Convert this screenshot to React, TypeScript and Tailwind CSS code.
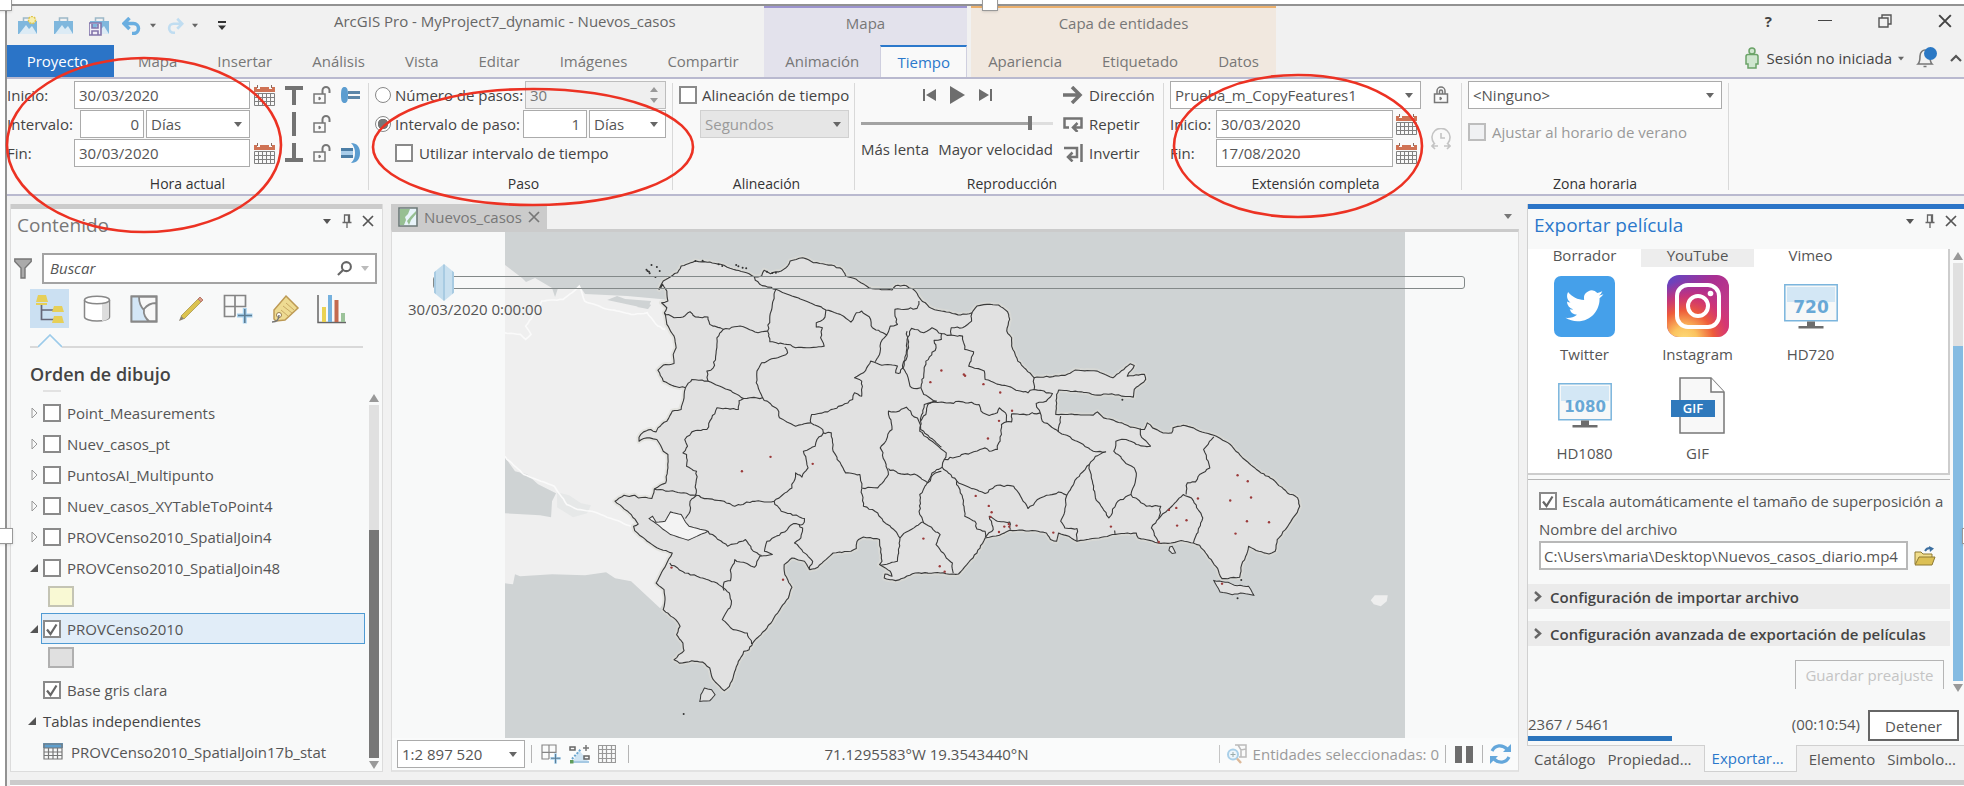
import React from "react";
import type { ReactNode } from "react";

/* ---------- map geometry ---------- */

type Pt = [number, number];
type Sheet = { x: number; y: number; kx: number };
const NW: Sheet = { x: 380, y: 190, kx: 2.8 };
const EAST: Sheet = { x: 900, y: 230, kx: 2.45 };
const SW: Sheet = { x: 480, y: 460, kx: 2.8 };

/* Turns the digitised points of one sheet into map coordinates. */
const place = (s: Sheet, list: string): Pt[] =>
  list
    .trim()
    .split(/\s+/)
    .map((p) => {
      const [a, b] = p.split(",").map(Number);
      return [s.x + a / s.kx, s.y + b / 3] as Pt;
    });

/* Breaks long segments up and shifts the new vertices a little, so borders look surveyed. */
const rough = (pts: Pt[], closed = false, amp = 1): string => {
  let seed = 7;
  const rnd = () => {
    seed = (seed * 16807) % 2147483647;
    return seed / 2147483647 - 0.5;
  };
  const src = closed ? [...pts, pts[0]] : pts;
  let d = `M${src[0][0].toFixed(1)} ${src[0][1].toFixed(1)}`;
  for (let i = 1; i < src.length; i++) {
    const [x0, y0] = src[i - 1];
    const [x1, y1] = src[i];
    const n = Math.max(1, Math.round(Math.hypot(x1 - x0, y1 - y0) / 3));
    for (let k = 1; k <= n; k++) {
      const j = k === n ? 0 : amp * 1.8;
      d += `L${(x0 + ((x1 - x0) * k) / n + rnd() * j).toFixed(1)} ${(y0 + ((y1 - y0) * k) / n + rnd() * j).toFixed(1)}`;
    }
  }
  return closed ? d + "Z" : d;
};

const outline: Pt[] = [
  ...place(
    NW,
    "655,930 680,912 695,916 710,912 720,920 740,918 758,922 765,893 797,875 803,830 803,790 790,780 772,745 752,740 735,742 722,750 722,738 735,722 755,715 770,722 775,710 800,690 815,660 840,655 848,620 852,590 820,585 790,570 775,537 790,522 820,517 818,490 826,470 820,435 800,400 793,365 800,350 785,335 803,330 800,300 788,280 778,295 790,270 830,245 840,225 860,218 880,210 920,213 950,220 985,235 1030,248 1045,258 1065,255 1072,238 1090,248 1120,240 1138,225 1145,210 1180,200 1210,215 1260,222 1290,235 1300,255 1330,265 1365,290 1400,296 1430,297 1440,284 1470,284 1495,300 1510,325 1540,352 1568,360",
  ),
  ...place(
    EAST,
    "110,243 145,252 173,245 185,225 210,220 238,222 260,242 265,265 258,300 270,320 270,345 285,390 325,440 400,433 425,417 480,420 518,440 545,415 560,398 570,403 553,435 595,430 598,445 570,475 568,498 540,495 515,488 480,492 440,482 385,477 380,490 378,550 430,550 470,552 480,542 495,560 540,575 560,588 595,595 602,575 615,590 640,605 662,605 665,590 690,582 715,590 730,600 765,612 800,635 840,685 880,725 910,745 945,785 970,800 975,825 965,850 940,895 920,925 915,960 900,968 875,960 850,945 845,970 833,1000 828,1038 785,1042 770,1005 745,965 730,942 715,935 685,928 660,935 628,935 580,920 575,905 530,908 490,918 430,930 410,915 385,905 380,930 365,925 355,905 320,898 265,897 240,912 215,918 205,920 185,965 150,1015 140,1028",
  ),
  ...place(
    SW,
    "1320,338 1285,335 1215,335 1160,358 1128,350 1130,338 1150,345 1145,330 1115,310 1122,300 1115,235 1070,227 1052,240 1050,262 1035,270 985,275 965,295 935,322 920,325 905,300 870,290 848,310 850,340 870,378 860,410 830,455 800,500 760,545 750,565 735,570 720,600 705,650 695,675 680,688 650,655 640,620 620,602 590,598 555,605 540,595 568,568 565,545 547,520 557,495 545,475 510,445 515,415 512,385 490,365 510,325 535,275 500,263 465,240 430,208 427,195 440,188 415,155",
  ),
];

const borders: string[] = [
  ...[
    "1045,258 1060,280 1105,295 1150,315 1200,335 1245,357 1285,370 1315,393 1330,365 1345,360 1370,385 1375,410 1415,432 1425,405 1445,400 1438,355 1500,352 1505,330",
    "1105,295 1095,340 1088,375 1082,420 1088,452 1135,460 1160,470 1200,470 1240,465 1230,440 1235,410 1218,408 1218,395 1238,385 1245,357",
    "793,365 820,380 845,378 865,362 880,378 915,378 920,400 958,415 1005,405 1055,425 1082,420",
    "958,415 940,440 938,480 930,530 912,540 915,570",
    "852,590 870,565 915,570 970,595 1015,622 1068,620 1050,575 1052,540 1065,515 1110,500 1138,485 1130,468",
    "1015,622 1002,628 1000,655 970,652 940,650 920,690 912,715 870,722 850,745 858,765 845,785 855,790 855,825 883,840 880,912",
    "1068,620 1110,655 1115,680 1160,705 1203,695 1230,710 1238,725 1220,745 1215,765 1182,780 1195,830 1178,858 1160,845 1150,890 1100,930 1040,930 990,945 960,930 910,922 880,912 765,893",
    "1203,695 1205,670 1250,662 1320,625 1325,605 1345,615 1345,570 1325,560 1350,545 1370,510 1395,520 1445,525 1440,545 1453,545 1460,530 1475,560 1485,590 1510,590",
    "1415,432 1398,455 1395,490 1383,512",
    "1460,530 1470,480 1472,420",
    "1238,725 1260,725 1265,780 1300,845 1340,850 1345,890 1390,890 1420,850 1410,810 1397,770 1430,715 1420,660 1450,660 1470,648 1505,690 1510,715 1568,768",
    "1510,690 1520,640 1555,630",
    "1420,832 1455,848 1500,852 1530,875 1545,850 1568,840",
  ].map((p) => rough(place(NW, p))),
  ...[
    "173,245 172,270 150,290 122,290 122,312 150,315 155,355 177,362 165,405 203,420 205,445 240,460 310,485 325,475 370,487 355,510 330,517 340,545 290,550 270,548 270,572 257,572 255,545 240,530 235,545 215,553 195,540 190,520 150,512 120,515 80,512 65,520 60,550 47,570 45,600 80,635 110,665 105,685 170,665 205,650 215,660 235,655 245,610 245,580 257,572",
    "325,440 325,475",
    "122,312 98,308 98,325 80,328 85,350 60,390 55,430 48,470 55,490 85,512",
    "100,308 75,290 55,305 25,292 15,320 18,350 5,410",
    "105,685 100,708 140,755 150,760 205,787 235,762 275,765 310,832 340,800 385,782 405,792 430,740 460,700 475,675 500,662 470,660 430,630 385,602 345,570 340,545",
    "385,602 390,555",
    "405,792 400,840 390,870 400,890 430,892 430,930",
    "460,700 465,740 475,800 508,860 530,810 562,790 575,735 570,710 545,690 520,660 525,630 550,625 575,640 610,645 585,610 585,592",
    "562,790 600,825 635,825 630,862 612,890 630,935",
    "630,862 690,790 710,800 738,860 715,935",
    "765,617 740,655 755,710 730,730 720,752 700,755 697,790",
    "523,908 522,898",
    "135,750 150,800 155,855 180,870 185,893 205,900 207,918",
    "205,918 225,895 215,855 235,870 265,872 267,895",
    "100,708 75,725 65,752 45,790 45,850 55,875 95,910 85,940 110,980 125,995 127,1025",
  ].map((p) => rough(place(EAST, p))),
  ...[
    "1065,82 1070,135 1110,155 1125,180 1155,205 1172,230 1165,300 1118,312",
    "1172,230 1190,212 1237,182",
    "820,120 840,150 905,172 900,190 875,187 835,222 800,240 793,270 815,280 780,285 765,318 710,295 700,320 698,358 680,362 680,388",
    "890,190 900,200 895,230 877,245 915,285 928,300 918,325",
    "603,102 585,120 585,150 572,172",
    "635,210 690,255 740,235 762,270 785,283",
    "528,305 570,335 620,350 660,365 695,395 700,430 675,475 705,505 745,515 757,548",
  ].map((p) => rough(place(SW, p))),
];

const islands = [
  rough(place(SW, "625,680 645,685 655,700 640,718 612,720 615,700"), true, 0.2),
  rough(place(EAST, "765,1048 800,1053 815,1062 850,1065 863,1092 830,1085 810,1090 780,1082"), true, 0.5),
  rough(place(EAST, "655,957 657,947 663,945 671,965 663,967"), true, 0.2),
];
const lake = rough(place(SW, "470,172 480,165 490,183 515,180 530,152 560,160 572,182 582,195 635,210 580,237 530,220 490,187"), true, 0.3);
const keys: Pt[] = [
  ...place(NW, "743,236 746,240 750,242 752,247 757,222 772,228 780,240 768,258 994,222 1000,226 1012,230 1022,232 880,210 900,209 945,220 955,225 1080,242 1095,246 1105,245"),
  ...place(EAST, "541,506 832,1046 823,1101"),
  ...place(SW, "567,758"),
];
const cases: Pt[] = [
  ...place(
    EAST,
    "98,418 71,453 153,430 156,434 201,459 242,484 271,539 239,569 212,622 182,794 214,824 221,843 218,857 252,886 263,878 264,886 239,902 282,883 372,904 513,886 655,836 673,830 698,867 675,883 726,802 805,808 823,732 848,750 856,799 846,870 900,873 818,907 630,932 785,1057 54,922 94,1005 106,1021",
  ),
  ...place(NW, "1010,840 1090,797 1208,818"),
  ...place(SW, "533,319 845,355"),
];
const roads = [
  rough(place(NW, "347,425 390,430 405,445 420,430 405,405 430,365 450,330 510,325 540,300 555,285 570,330 620,350 700,370 745,365 775,405 795,415"), false, 0.5),
  rough(place(SW, "67,-15 80,0 120,40 205,75 240,130 270,145 310,150 360,170 420,195"), false, 0.5),
];

function MapDrawing() {
  return (
    <svg viewBox="504 231 900 506" className="block h-full min-h-[506px] w-[80%]" preserveAspectRatio="xMidYMid slice" role="img" aria-label="Mapa de provincias">
      <rect x="0" y="0" width="1964" height="786" fill="#cfd3d4" />
      <path
        fill="#efefef"
        d="M504 264 521 277 525 281 534 277 551 287 554 296 557 287 580 287 584 293 626 295 659 298 675 300 700 400 690 560 659 607 630 580 614 577 605 571 584 574 551 573 519 575 514 573 512 583 504 582Z"
      />
      <path fill="#cfd3d4" d="M504 456 514 470 526 473 537 483 555 492 551 500 550 516 539 514 504 512ZM606 299 616 295 624 298 650 300 646 308 634 305ZM636 306l6-6 8 4-3 4z" />
      <path fill="#e6e8e8" d="M556 491l12 3 12 8 10 2-4 8-14 4-16-10z" />
      {roads.map((d) => (
        <path key={d} d={d} fill="none" stroke="#fafafa" strokeWidth="1.6" />
      ))}
      <path d={rough(outline, true, 0.6)} fill="none" stroke="#dcdcd6" strokeWidth="5" strokeLinejoin="round" opacity=".6" />
      <path d={rough(outline, true, 0.6)} fill="#e1e1e1" stroke="#3a3a3a" strokeWidth="1.1" strokeLinejoin="round" />
      {borders.map((d) => (
        <path key={d} d={d} fill="none" stroke="#3a3a3a" strokeWidth="1.1" strokeLinejoin="round" />
      ))}
      <path d={lake} fill="#f3f3f3" stroke="#3a3a3a" strokeWidth="1" />
      {islands.map((d) => (
        <path key={d} d={d} fill="#e1e1e1" stroke="#3a3a3a" strokeWidth="1" />
      ))}
      <path fill="#eeeeee" d="M1369 599 1373 594 1386 594 1385 600 1379 605 1372 603Z" />
      {keys.map(([x, y], i) => (
        <circle key={i} cx={x} cy={y} r="1" fill="#333" />
      ))}
      {cases.map(([x, y], i) => (
        <circle key={i} cx={x} cy={y} r="1.2" fill="#9b3a3a" />
      ))}
    </svg>
  );
}

/* ---------- small controls ---------- */

function Caret({ className = "" }: { className?: string }) {
  return (
    <svg viewBox="0 0 8 5" className={`h-[5px] w-2 shrink-0 ${className}`} aria-hidden="true">
      <path d="M0 0h8L4 5z" fill="currentColor" />
    </svg>
  );
}

function Select({ label, value, className = "", disabled = false, id }: { label: string; value: string; className?: string; disabled?: boolean; id?: string }) {
  return (
    <span className={`relative flex items-center ${className}`}>
      <select
        id={id}
        aria-label={label}
        disabled={disabled}
        className="h-7 w-full appearance-none border border-[#ababab] bg-white pr-5 pl-1 text-[#555] disabled:border-[#d0d0d0] disabled:bg-[#e6e6e6] disabled:text-[#9a9a9a] disabled:opacity-100"
      >
        <option>{value}</option>
      </select>
      <Caret className="pointer-events-none absolute right-2 text-[#666]" />
    </span>
  );
}

function Check({ id, checked = false, disabled = false }: { id: string; checked?: boolean; disabled?: boolean }) {
  return (
    <span className="relative flex shrink-0">
      <input
        id={id}
        type="checkbox"
        defaultChecked={checked}
        disabled={disabled}
        className="peer size-[18px] appearance-none border-2 border-[#8a8a8a] bg-white disabled:border-[#bdbdbd] disabled:bg-[#f0f1f3]"
      />
      <svg viewBox="0 0 18 18" className="pointer-events-none absolute inset-0 hidden peer-checked:block" aria-hidden="true">
        <path d="M4 9.5 7.5 14 13.5 4.5" fill="none" stroke="#666" strokeWidth="2.2" />
      </svg>
    </span>
  );
}

const field = "h-7 border border-[#ababab] bg-white px-1 text-[#555]";

/* ---------- icons ---------- */

const Calendar = () => (
  <svg viewBox="0 0 21 21" className="h-[21px] w-[21px] shrink-0" aria-hidden="true">
    <path d="M0 2h3v2h3V2h9v2h3V2h3v5H0z" fill="#cf7254" />
    <path d="M3.5 0v3M17.500 0v3" stroke="#8a6a60" />
    <path d="M.5 8.500h20v12H.5zM4.500 8.500v12M8.500 8.500v12M12.500 8.500v12M16.500 8.500v12M.5 12.500h20M.5 16.500h20" fill="none" stroke="#808080" />
  </svg>
);

const OpenLock = () => (
  <svg viewBox="0 0 18 18" className="size-[18px] shrink-0" fill="none" stroke="#777" aria-hidden="true">
    <path d="M1 8h11v9H1z" strokeWidth="1.500" />
    <path d="M9.500 8V4.500a3.500 3.500 0 0 1 7 0V7" strokeWidth="2" />
    <path d="M6 11v3l2-1.500z" fill="#777" />
  </svg>
);

const ClosedLock = () => (
  <svg viewBox="0 0 16 18" className="h-[18px] w-4 shrink-0" fill="none" stroke="#777" aria-hidden="true">
    <path d="M1.500 8h13v8.500h-13z" strokeWidth="1.500" />
    <path d="M4 8V5a4 4 0 0 1 8 0v3M6.500 8V5.500a1.500 1.500 0 0 1 3 0V8" strokeWidth="1.500" />
    <path d="M7 11v3l2-1.500z" fill="#777" />
  </svg>
);

const Ibar = ({ kind }: { kind: "top" | "mid" | "bottom" }) => (
  <svg viewBox="0 0 18 24" className="h-6 w-[18px] shrink-0" fill="#737373" aria-hidden="true">
    {kind === "top" && <path d="M0 3h18v4h-7v15H7V7H0z" />}
    {kind === "mid" && <path d="M7 0h4v24H7z" />}
    {kind === "bottom" && <path d="M0 21h18v-4h-7V2H7v15H0z" />}
  </svg>
);

const Pin = () => (
  <svg viewBox="0 0 10 14" className="h-[14px] w-[10px]" fill="none" stroke="#666" strokeWidth="1.300" aria-hidden="true">
    <path d="M2.500 8V1h5v7M6.500 1v7M.5 8.500h9M5 8.500V14" />
  </svg>
);

const Cross = ({ className = "" }: { className?: string }) => (
  <svg viewBox="0 0 12 12" className={`size-3 ${className}`} fill="none" stroke="currentColor" strokeWidth="1.700" aria-hidden="true">
    <path d="M1 1l10 10M11 1 1 11" />
  </svg>
);

const GridPlus = ({ className = "" }: { className?: string }) => (
  <svg viewBox="0 0 30 30" className={className} fill="none" aria-hidden="true">
    <path d="M1.500 1.500h21v11h-21zM12 1.500v21M1.500 12.500v10H12" stroke="#858585" strokeWidth="1.700" />
    <path d="M14 21.500h15.500M21.800 14v15.500" stroke="#a9d3ef" strokeWidth="4" />
    <path d="M15 21.500h14M21.800 15v14" stroke="#5d7d94" strokeWidth="1.600" />
  </svg>
);

const Window = ({ sun = false, disk = false }: { sun?: boolean; disk?: boolean }) => (
  <svg viewBox="0 0 21 20" className="h-5 w-[21px]" aria-hidden="true">
    <path d="M6.500 5V2h8v3" fill="none" stroke="#9cb8c8" strokeWidth="1.500" />
    <path d="M1 5h19v13H1z" fill="#7fb7dd" />
    <path d="M2 18 9 9l3 4 3-3 5 8z" fill="#dcebf5" />
    {sun && <circle cx="15" cy="4" r="3.500" fill="#f7efb0" stroke="#dfc44a" strokeWidth="1.500" strokeDasharray="2 1" />}
    {disk && <path d="M0 7h12v12H0zM3 8v4h6V8M3 19v-4h6v4" fill="#f1eef7" stroke="#8275ab" strokeWidth="1.600" />}
  </svg>
);

function Monitor({ text, size }: { text: string; size: number }) {
  return (
    <svg viewBox="0 0 54 45" className="h-[45px] w-[54px]" aria-hidden="true">
      <path d="M.8.8h52.400v36H.8z" fill="#f7f8f8" stroke="#7bb5dd" strokeWidth="1.500" />
      <path d="M3 3h48v15H3z" fill="#d3e7f5" />
      <text x="27" y="28.500" textAnchor="middle" fontFamily="DejaVu Sans" fontWeight="700" fontSize={size} fill="#68a8d6">
        {text}
      </text>
      <path d="M23 37.500h8V42h8.500v2.500h-25V42H23z" fill="#6d6d6d" />
    </svg>
  );
}

const Twitter = () => (
  <svg viewBox="0 0 61 61" className="size-[61px]" aria-hidden="true">
    <rect width="61" height="61" rx="7" fill="#45a0ea" />
    <path
      transform="translate(11.500 11) scale(1.580)"
      fill="#fff"
      d="M23.950 4.570a10 10 0 0 1-2.820.77 4.960 4.960 0 0 0 2.160-2.720c-.95.550-2 .95-3.130 1.180a4.920 4.920 0 0 0-8.380 4.480C7.690 8.100 4.070 6.130 1.640 3.160a4.820 4.820 0 0 0-.67 2.480c0 1.710.87 3.210 2.190 4.100a4.900 4.900 0 0 1-2.230-.62v.06a4.920 4.920 0 0 0 3.950 4.830 5 5 0 0 1-2.210.08 4.940 4.940 0 0 0 4.600 3.420A9.870 9.870 0 0 1 0 19.540a14 14 0 0 0 7.550 2.210c9.050 0 14-7.500 14-13.980 0-.210 0-.420-.02-.630a9.940 9.940 0 0 0 2.460-2.550z"
    />
  </svg>
);

const Instagram = () => (
  <svg viewBox="0 0 62 62" className="size-[62px]" aria-hidden="true">
    <defs>
      <linearGradient id="ig-base" x1="0" y1="0" x2="1" y2="1">
        <stop offset="0" stopColor="#5a49c8" />
        <stop offset=".4" stopColor="#a92f92" />
        <stop offset="1" stopColor="#d8437c" />
      </linearGradient>
      <radialGradient id="ig-glow" cx=".28" cy="1.050" r=".95">
        <stop offset="0" stopColor="#fddc7a" />
        <stop offset=".22" stopColor="#fbc35f" />
        <stop offset=".5" stopColor="#ee5c3a" />
        <stop offset=".75" stopColor="#d8336c" stopOpacity=".7" />
        <stop offset="1" stopColor="#c02f8a" stopOpacity="0" />
      </radialGradient>
    </defs>
    <rect width="62" height="62" rx="12" fill="url(#ig-base)" />
    <rect width="62" height="62" rx="12" fill="url(#ig-glow)" />
    <g fill="none" stroke="#fff" strokeWidth="4">
      <rect x="10" y="10" width="42" height="42" rx="11" />
      <circle cx="31" cy="31" r="10" />
    </g>
    <circle cx="43.500" cy="18.500" r="2.800" fill="#fff" />
  </svg>
);

const Gif = () => (
  <svg viewBox="0 0 54 57" className="h-[57px] w-[54px]" aria-hidden="true">
    <path d="M9 1h31l13 14v41H9z" fill="#f8f8f8" stroke="#777" strokeWidth="1.500" />
    <path d="M40 1v14h13" fill="#fff" stroke="#777" strokeWidth="1.500" />
    <path d="M0 23h44v17H0z" fill="#2f79bc" />
    <text x="22" y="36" textAnchor="middle" fontFamily="Open Sans" fontWeight="600" fontSize="13" fill="#fff">
      GIF
    </text>
  </svg>
);

/* ---------- header ---------- */

function Tab({ children, active = false }: { children: ReactNode; active?: boolean }) {
  return (
    <button
      type="button"
      className={
        active
          ? "h-8 border-x border-t-2 border-x-[#cfcfdf] border-t-[#2b78cb] bg-[#f9f9f9] px-4 text-[#2b78cb]"
          : "h-8 px-5 text-[#777]"
      }
    >
      {children}
    </button>
  );
}

function Header() {
  return (
    <header className="flex border-b-2 border-[#b9b9cf] bg-[#f1f1f1]">
      <div className="w-[757px] shrink-0">
        <div className="flex h-[39px] items-center pl-[10px]">
          <div className="flex w-[317px] items-center">
            <button type="button" aria-label="Nuevo proyecto" className="mr-[15px]"><Window sun /></button>
            <button type="button" aria-label="Abrir proyecto" className="mr-[15px]"><Window /></button>
            <button type="button" aria-label="Guardar proyecto" className="mr-3"><Window disk /></button>
            <button type="button" aria-label="Deshacer" className="flex items-center gap-2 text-[#666]">
              <svg viewBox="0 0 20 18" className="h-[18px] w-5" fill="none" stroke="#6aaee0" strokeWidth="3.500" aria-hidden="true">
                <path d="M2 6.500h9.500a5 5 0 0 1 0 10H10M7.500 1 2 6.500 7.500 12" />
              </svg>
              <Caret className="h-1 w-[6px]" />
            </button>
            <button type="button" aria-label="Rehacer" className="ml-[10px] flex items-center gap-2 text-[#666]">
              <svg viewBox="0 0 20 18" className="h-[18px] w-[18px]" fill="none" stroke="#c0ddf1" strokeWidth="3" aria-hidden="true">
                <path d="M18 6.500H8.500a5 5 0 0 0 0 10H10M12.500 1 18 6.500 12.500 12" />
              </svg>
              <Caret className="h-1 w-[6px]" />
            </button>
            <button type="button" aria-label="Personalizar" className="ml-5 text-[#333]">
              <svg viewBox="0 0 8 9" className="h-[9px] w-2" aria-hidden="true">
                <path d="M0 0h8v2H0zM0 4.500h8L4 9z" fill="currentColor" />
              </svg>
            </button>
          </div>
          <h1 className="-mt-[10px] whitespace-nowrap text-[#666]">ArcGIS Pro - MyProject7_dynamic - Nuevos_casos</h1>
        </div>
        <nav className="flex">
          <button type="button" className="mr-1 h-8 w-[107px] bg-[#2b74c7] pr-[6px] text-white">Proyecto</button>
          <Tab>Mapa</Tab>
          <Tab>Insertar</Tab>
          <Tab>Análisis</Tab>
          <Tab>Vista</Tab>
          <Tab>Editar</Tab>
          <Tab>Imágenes</Tab>
          <Tab>Compartir</Tab>
        </nav>
      </div>
      <div className="mr-1 w-[203px] shrink-0 border-t-2 border-[#9c94cf] bg-[#e3e2ec] text-center text-[#777]">
        <div className="mb-2 flex h-[29px] items-center justify-center">Mapa</div>
        <nav className="flex justify-between">
          <button type="button" className="h-8 flex-1 text-[#777]">Animación</button>
          <Tab active>Tiempo</Tab>
        </nav>
      </div>
      <div className="w-[305px] shrink-0 border-t-2 border-[#ecb06c] bg-[#f1e8df] text-[#777]">
        <div className="mb-2 flex h-[29px] items-center justify-center">Capa de entidades</div>
        <nav className="flex justify-center">
          <Tab>Apariencia</Tab>
          <Tab>Etiquetado</Tab>
          <Tab>Datos</Tab>
        </nav>
      </div>
      <div className="flex flex-1 flex-col items-end">
        <div className="flex h-[29px] items-center gap-[46px] pr-3 text-[#444]">
          <button type="button" aria-label="Ayuda" className="font-bold">?</button>
          <button type="button" aria-label="Minimizar" className="h-px w-[14px] bg-[#444]" />
          <button type="button" aria-label="Restaurar">
            <svg viewBox="0 0 14 14" className="size-[14px]" fill="none" stroke="#555" strokeWidth="1.400" aria-hidden="true">
              <path d="M1 4h9v9H1zM4 4V1h9v9h-3" />
            </svg>
          </button>
          <button type="button" aria-label="Cerrar"><Cross className="size-[14px]" /></button>
        </div>
        <div className="mt-2 flex h-[30px] items-center pr-[2px] text-[#444]">
          <svg viewBox="0 0 14 22" className="mr-2 h-[22px] w-[14px]" fill="#cfe6cf" stroke="#6ba368" strokeWidth="1.500" aria-hidden="true">
            <circle cx="7" cy="4" r="3" />
            <path d="M1 9.500C1 8 2 7.500 3 7.500h8c1 0 2 .5 2 2V17h-2v4H3v-4H1z" />
          </svg>
          <button type="button" className="flex items-center gap-[6px]">
            Sesión no iniciada
            <Caret className="h-1 w-[6px] text-[#666]" />
          </button>
          <button type="button" aria-label="Notificaciones" className="mr-3 ml-3">
            <svg viewBox="0 0 22 22" className="size-[22px]" fill="none" stroke="#777" strokeWidth="1.600" aria-hidden="true">
              <path d="M2 17c2-2 2-4 2-8 0-4 3-6 5-6s5 2 5 6c0 4 0 6 2 8zM7.500 19.500h3" />
              <circle cx="14.500" cy="6.500" r="6.500" fill="#2b78c4" stroke="none" />
            </svg>
          </button>
          <button type="button" aria-label="Contraer cinta">
            <svg viewBox="0 0 12 8" className="h-2 w-3" fill="none" stroke="#555" strokeWidth="2.200" aria-hidden="true">
              <path d="M1 7l5-5 5 5" />
            </svg>
          </button>
        </div>
      </div>
    </header>
  );
}

/* ---------- ribbon ---------- */

function Group({ title, className, children }: { title: string; className: string; children: ReactNode }) {
  return (
    <>
      <section className={`flex shrink-0 flex-col pt-[2px] ${className}`}>
        {children}
        <h2 className="mt-auto text-center text-sm leading-5 text-[#333]">{title}</h2>
      </section>
      <div className="my-1 w-px shrink-0 bg-[#d9d9d9]" />
    </>
  );
}

function Ribbon() {
  return (
    <div className="flex h-[117px] border-b-2 border-[#b9b9cf] bg-[#f9f9f9] text-[#444]">
      <Group title="Hora actual" className="w-[361px]">
        <div className="grid gap-px">
          <div className="flex h-7 items-center">
            <label htmlFor="ha-ini" className="w-[67px]">Inicio:</label>
            <input id="ha-ini" defaultValue="30/03/2020" className={`${field} w-[176px]`} />
            <span className="ml-1 flex flex-1 items-center gap-[10px]">
              <Calendar /><Ibar kind="top" /><OpenLock />
              <svg viewBox="0 0 19 18" className="h-[18px] w-[19px]" aria-hidden="true">
                <path d="M3.500 1C6 1 7 3 7 9s-1 8-3.500 8S0 15 0 9s1-8 3.500-8z" fill="#5c9dd0" />
                <path d="M7 5h12v3H7zM7 10h12v3H7z" fill="#5c86a8" />
              </svg>
            </span>
          </div>
          <div className="flex h-7 items-center">
            <label htmlFor="ha-int" className="w-[73px]">Intervalo:</label>
            <input id="ha-int" defaultValue="0" className={`${field} w-[64px] text-right`} />
            <Select label="Unidad del intervalo" value="Días" className="ml-[2px] w-[104px]" />
            <span className="ml-[35px] flex items-center gap-[10px]"><Ibar kind="mid" /><OpenLock /></span>
          </div>
          <div className="flex h-7 items-center">
            <label htmlFor="ha-fin" className="w-[67px]">Fin:</label>
            <input id="ha-fin" defaultValue="30/03/2020" className={`${field} w-[176px]`} />
            <span className="ml-1 flex flex-1 items-center gap-[10px]">
              <Calendar /><Ibar kind="bottom" /><OpenLock />
              <svg viewBox="0 0 19 20" className="h-5 w-[19px]" aria-hidden="true">
                <path d="M0 5h12v3H0zM0 12h12v3H0z" fill="#4c7ea6" />
                <path d="M0 8h12v4H0z" fill="#a9cdea" />
                <path d="M10 0c6 0 9 4 9 10s-3 10-9 10c3-3 4-6 4-10s-1-7-4-10z" fill="#5c9dd0" />
              </svg>
            </span>
          </div>
        </div>
      </Group>

      <Group title="Paso" className="w-[303px] pl-[6px]">
        <div className="grid gap-px">
          <div className="flex h-7 items-center">
            <input id="p-num" name="paso" type="radio" className="mr-1 size-4 appearance-none rounded-full border border-[#888] bg-white" />
            <label htmlFor="p-num" className="w-[130px] whitespace-nowrap">Número de pasos:</label>
            <span className="relative flex w-[141px] items-center">
              <input aria-label="Pasos" disabled defaultValue="30" className="h-7 w-full border border-[#bdbdbd] bg-[#efefef] px-1 text-[#777]" />
              <svg viewBox="0 0 8 16" className="pointer-events-none absolute right-2 h-4 w-2" fill="#999" aria-hidden="true">
                <path d="M0 5l4-5 4 5zM0 11h8l-4 5z" />
              </svg>
            </span>
          </div>
          <div className="flex h-7 items-center">
            <input
              id="p-int"
              name="paso"
              type="radio"
              defaultChecked
              className="mr-1 size-4 appearance-none rounded-full border border-[#888] bg-white checked:bg-[radial-gradient(circle,#777_50%,#fff_56%)]"
            />
            <label htmlFor="p-int" className="w-[128px] whitespace-nowrap">Intervalo de paso:</label>
            <input aria-label="Intervalo de paso" defaultValue="1" className={`${field} w-[64px] pr-[6px] text-right`} />
            <Select label="Unidad de paso" value="Días" className="ml-[2px] w-[77px]" />
          </div>
          <div className="flex h-7 items-center gap-[6px] pl-5">
            <Check id="p-uti" />
            <label htmlFor="p-uti">Utilizar intervalo de tiempo</label>
          </div>
        </div>
      </Group>

      <Group title="Alineación" className="w-[181px] pl-[6px]">
        <div className="grid gap-px">
          <div className="flex h-7 items-center gap-[5px]">
            <Check id="al" />
            <label htmlFor="al" className="whitespace-nowrap">Alineación de tiempo</label>
          </div>
          <Select label="Unidad de alineación" value="Segundos" disabled className="ml-[21px] w-[149px]" />
        </div>
      </Group>

      <Group title="Reproducción" className="w-[308px] pl-[6px]">
        <div className="flex gap-[10px]">
          <div className="w-[192px]">
            <div className="flex h-7 items-center justify-center gap-[14px] text-[#6d6d6d]">
              <button type="button" aria-label="Anterior">
                <svg viewBox="0 0 13 12" className="h-3 w-[13px]" fill="currentColor"><path d="M0 0h2v12H0zM13 0v12L3 6z" /></svg>
              </button>
              <button type="button" aria-label="Reproducir">
                <svg viewBox="0 0 15 18" className="h-[18px] w-[15px]" fill="currentColor"><path d="M0 0l15 9L0 18z" /></svg>
              </button>
              <button type="button" aria-label="Siguiente">
                <svg viewBox="0 0 13 12" className="h-3 w-[13px]" fill="currentColor"><path d="M11 0h2v12h-2zM0 0l10 6-10 6z" /></svg>
              </button>
            </div>
            <input
              type="range"
              aria-label="Velocidad"
              defaultValue={89}
              className="block h-7 w-full appearance-none bg-transparent [&::-webkit-slider-runnable-track]:h-[3px] [&::-webkit-slider-runnable-track]:bg-[linear-gradient(to_right,#a3a3a3_88%,#dedede_88%)] [&::-webkit-slider-thumb]:-mt-[6px] [&::-webkit-slider-thumb]:h-[14px] [&::-webkit-slider-thumb]:w-1 [&::-webkit-slider-thumb]:appearance-none [&::-webkit-slider-thumb]:bg-[#777]"
            />
            <div className="flex h-6 items-center justify-between whitespace-nowrap">
              <span>Más lenta</span>
              <span>Mayor velocidad</span>
            </div>
          </div>
          <div className="grid gap-px">
            <button type="button" className="flex h-7 items-center gap-[6px]">
              <svg viewBox="0 0 20 18" className="h-[18px] w-5" fill="none" stroke="#737373" strokeWidth="3.500" aria-hidden="true"><path d="M0 9h17M9 1l8 8-8 8" /></svg>
              Dirección
            </button>
            <button type="button" className="flex h-7 items-center gap-[6px]">
              <svg viewBox="0 0 20 16" className="h-4 w-5" fill="none" stroke="#737373" strokeWidth="2.500" aria-hidden="true"><path d="M6 11.500H1.500v-9h17v9H11M14.500 7 10 11.500l4.500 4.500" /></svg>
              Repetir
            </button>
            <button type="button" className="flex h-7 items-center gap-[6px]">
              <svg viewBox="0 0 20 18" className="h-[18px] w-5" fill="none" stroke="#737373" strokeWidth="2.500" aria-hidden="true"><path d="M18.500 0v18M1 4h13v9H6M9.500 8.500 5 13l4.500 4.500" /></svg>
              Invertir
            </button>
          </div>
        </div>
      </Group>

      <Group title="Extensión completa" className="w-[297px] pl-[6px]">
        <div className="flex">
          <div className="grid w-[251px] gap-px">
            <Select label="Capa de extensión" value="Prueba_m_CopyFeatures1" className="w-full" />
            <div className="flex h-7 items-center">
              <label htmlFor="ex-ini" className="w-[46px]">Inicio:</label>
              <input id="ex-ini" defaultValue="30/03/2020" className={`${field} mr-[3px] w-[177px]`} />
              <Calendar />
            </div>
            <div className="flex h-7 items-center">
              <label htmlFor="ex-fin" className="w-[46px]">Fin:</label>
              <input id="ex-fin" defaultValue="17/08/2020" className={`${field} mr-[3px] w-[177px]`} />
              <Calendar />
            </div>
          </div>
          <div className="flex flex-1 flex-col items-center gap-6 pt-[5px]">
            <button type="button" aria-label="Bloquear extensión"><ClosedLock /></button>
            <button type="button" aria-label="Ajustar extensión temporal">
              <svg viewBox="0 0 20 22" className="h-[22px] w-5" fill="none" stroke="#c4c4c4" strokeWidth="1.600" aria-hidden="true">
                <path d="M3 15a9 9 0 1 1 14 0M10 5v5h4M1 18h6M4 15l-3 3 3 3M19 18h-6M16 15l3 3-3 3" />
              </svg>
            </button>
          </div>
        </div>
      </Group>

      <Group title="Zona horaria" className="w-[266px] px-[6px]">
        <Select label="Zona horaria" value="&lt;Ninguno&gt;" className="w-full" />
        <div className="mt-[13px] flex items-center gap-[6px] text-[#9a9a9a]">
          <Check id="dst" disabled />
          <label htmlFor="dst">Ajustar al horario de verano</label>
        </div>
      </Group>
    </div>
  );
}

/* ---------- docked panes ---------- */

function PaneHeader({ title, blue = false }: { title: string; blue?: boolean }) {
  return (
    <div className={`flex h-[45px] shrink-0 items-start border-t-[5px] pl-[6px] ${blue ? "border-[#2b74c7] pr-[7px]" : "border-[#cbcbcb] pr-2"}`}>
      <h2 className={`flex-1 text-[19px] leading-8 ${blue ? "text-[#2b78cb]" : "text-[#777]"}`}>{title}</h2>
      <div className="flex items-center gap-[10px] pt-[5px] text-[#555]">
        <button type="button" aria-label={`Opciones de ${title}`}><Caret className="w-[10px]" /></button>
        <button type="button" aria-label={`Anclar ${title}`}><Pin /></button>
        <button type="button" aria-label={`Cerrar ${title}`}><Cross /></button>
      </div>
    </div>
  );
}

function ScrollBar({ blue = false }: { blue?: boolean }) {
  return (
    <div className="flex w-[10px] shrink-0 flex-col items-center gap-[3px]" aria-hidden="true">
      <svg viewBox="0 0 10 8" className="h-2 w-[10px] shrink-0" fill="#999"><path d="M0 8l5-8 5 8z" /></svg>
      <div className={`w-full ${blue ? "h-[83px] bg-[#e0e0e0]" : "h-[125px] bg-[#e0e0e0]"}`} />
      <div className={`-mt-[3px] w-full flex-1 ${blue ? "bg-[#84bbe2]" : "bg-[#777]"}`} />
      <svg viewBox="0 0 10 8" className="h-2 w-[10px] shrink-0" fill="#999"><path d="M0 0h10L5 8z" /></svg>
    </div>
  );
}

function Layer({ name, open = false, checked = false, selected = false, leaf = false }: { name: string; open?: boolean; checked?: boolean; selected?: boolean; leaf?: boolean }) {
  const id = `layer-${name}`;
  return (
    <li className="flex h-[31px] items-center">
      <span className="flex w-[14px] shrink-0 justify-center">
        {!leaf && (
          <svg viewBox="0 0 10 12" className="h-3 w-[10px]" aria-hidden="true">
            {open ? <path d="M9 2v8H1z" fill="#555" /> : <path d="M3 1l5 5-5 5z" fill="none" stroke="#999" />}
          </svg>
        )}
      </span>
      <span className={`flex h-full flex-1 items-center gap-[6px] border pl-px ${selected ? "border-[#4f9ad3] bg-[#e1edf8]" : "border-transparent"}`}>
        <Check id={id} checked={checked} />
        <label htmlFor={id}>{name}</label>
      </span>
    </li>
  );
}

function Contents() {
  return (
    <aside className="flex w-[373px] shrink-0 flex-col border-x border-b border-[#dcdcdc] bg-[#f8f9f9] text-[#555]">
      <PaneHeader title="Contenido" />
      <div className="mt-[3px] flex h-8 items-center pr-[5px] pl-[3px]">
        <svg viewBox="0 0 18 21" className="mr-[10px] h-[21px] w-[18px]" aria-hidden="true">
          <path d="M.8 1h16.400v2.500L11 10v10H7V10L.8 3.500z" fill="#aaa" stroke="#777" strokeWidth="1.400" />
        </svg>
        <span className="relative flex flex-1 items-center">
          <input aria-label="Buscar" placeholder="Buscar" className="h-[31px] w-full border-2 border-[#a3a3a3] bg-white px-[6px] italic placeholder:text-[#555]" />
          <svg viewBox="0 0 16 16" className="pointer-events-none absolute right-[25px] size-[15px]" fill="none" stroke="#666" strokeWidth="2.200" aria-hidden="true">
            <circle cx="10" cy="6" r="4.800" />
            <path d="M6.500 9.500 1 15" />
          </svg>
          <Caret className="pointer-events-none absolute right-2 text-[#bbb]" />
        </span>
      </div>

      <div className="mt-[5px] ml-[19px] flex gap-2">
        <button type="button" aria-label="Por orden de dibujo" className="flex size-[39px] items-center justify-center bg-[#cbe0f2]">
          <svg viewBox="0 0 30 30" className="size-[30px]" aria-hidden="true">
            <path d="M6.500 10v15.500H20M6.500 16H18" fill="none" stroke="#667" strokeWidth="1.700" />
            <path d="M3 1h8l2 7H1zM1 9h11v2H1zM19 12h8l2 6H17zM19 22h8l2 7H17z" fill="#e6cf58" />
          </svg>
        </button>
        <button type="button" aria-label="Por origen" className="flex size-[39px] items-center justify-center">
          <svg viewBox="0 0 28 28" className="size-7" fill="#fff" stroke="#888" strokeWidth="1.500" aria-hidden="true">
            <path d="M1.500 5v17c0 2 5.500 4 12.500 4s12.500-2 12.500-4V5" />
            <path d="M19 9v17c4-.5 7-2 7-4V6z" fill="#ddd" stroke="none" />
            <ellipse cx="14" cy="5" rx="12.500" ry="3.800" />
          </svg>
        </button>
        <button type="button" aria-label="Por selección" className="flex size-[39px] items-center justify-center">
          <svg viewBox="0 0 28 28" className="size-7" fill="none" stroke="#888" strokeWidth="1.800" aria-hidden="true">
            <path d="M1.500 1.500h25v25h-25z" fill="#f8f8f8" />
            <path d="M2 2h7c0 6 2 10 5 13-1 4 2 9 5 11H2z" fill="#d3e6f6" stroke="none" />
            <path d="M9 2c0 6 2 10 5 13-1 4 2 9 5 11M14 14c4-5 8-6 12-6M1.500 1.500h25v25h-25z" />
          </svg>
        </button>
        <button type="button" aria-label="Por edición" className="flex size-[39px] items-center justify-center">
          <svg viewBox="0 0 28 28" className="size-7" aria-hidden="true">
            <path d="M4 21 21 4l3 3L7 24z" fill="#dcc34f" stroke="#a9984e" strokeWidth=".8" />
            <path d="M21 4l2-2 3 3-2 2z" fill="#d99a86" stroke="#b97c6c" />
            <path d="M4 21l-2 5 5-2z" fill="#8a8170" />
          </svg>
        </button>
        <button type="button" aria-label="Por alineación" className="flex size-[39px] items-center justify-center"><GridPlus className="size-[30px]" /></button>
        <button type="button" aria-label="Por etiquetado" className="flex size-[39px] items-center justify-center">
          <svg viewBox="0 0 30 30" className="size-[30px]" aria-hidden="true">
            <path d="M16 2 28 14 15 26l-9 1-2-2V16z" fill="#eedb92" stroke="#bd9a55" strokeWidth="1.500" />
            <path d="M13 12l9 7M16 9l8 7M11 16l7 6" stroke="#c9a964" />
            <circle cx="9" cy="21" r="2.500" fill="#fff" stroke="#977d4a" />
            <path d="M9 21c0 4-2 7-7 7" fill="none" stroke="#777" strokeWidth="1.500" />
          </svg>
        </button>
        <button type="button" aria-label="Por gráficos" className="flex size-[39px] items-center justify-center">
          <svg viewBox="0 0 29 30" className="h-[30px] w-[29px]" aria-hidden="true">
            <path d="M1 1v27.500h28" fill="none" stroke="#666" strokeWidth="1.500" />
            <path d="M5 13h4v15H5z" fill="#ead252" />
            <path d="M11 1h4v27h-4z" fill="#75b1de" />
            <path d="M17.500 6h4v22h-4z" fill="#c3694f" />
            <path d="M24 19h4v9h-4z" fill="#9cc39a" />
          </svg>
        </button>
      </div>
      <div className="mx-[19px] mt-[6px] flex h-[14px] items-end">
        <div className="h-[2px] w-2 bg-[#d9d9d9]" />
        <svg viewBox="0 0 24 14" className="h-[14px] w-6" fill="none" stroke="#9ccbea" strokeWidth="1.600" aria-hidden="true"><path d="M0 13 12 1l12 12" /></svg>
        <div className="h-[2px] flex-1 bg-[#d9d9d9]" />
      </div>

      <h3 className="mt-[14px] pl-[19px] text-lg leading-6 font-semibold text-[#444]">Orden de dibujo</h3>
      <div className="mt-1 flex min-h-0 flex-1 pr-[3px] pl-4">
        <div className="mr-1 flex-1">
          <div className="mb-[5px] ml-4 h-[2px] w-[18px] bg-[#e2e2e2]" />
          <ul>
            <Layer name="Point_Measurements" />
            <Layer name="Nuev_casos_pt" />
            <Layer name="PuntosAI_Multipunto" />
            <Layer name="Nuev_casos_XYTableToPoint4" />
            <Layer name="PROVCenso2010_SpatialJoin4" />
            <Layer name="PROVCenso2010_SpatialJoin48" open />
            <li className="h-[30px] pt-[3px] pl-[21px]"><div className="h-[21px] w-[26px] border-2 border-[#c4c4b4] bg-[#f9f9d4]" /></li>
            <Layer name="PROVCenso2010" open checked selected />
            <li className="h-[30px] pt-[3px] pl-[21px]"><div className="h-[21px] w-[26px] border-2 border-[#b0b0b0] bg-[#e0e0e0]" /></li>
            <Layer name="Base gris clara" leaf checked />
            <li className="flex h-[31px] items-center text-[#444]">
              <svg viewBox="0 0 10 12" className="mr-[6px] h-3 w-[10px]" aria-hidden="true"><path d="M9 2v8H1z" fill="#555" /></svg>
              <span className="font-medium">Tablas independientes</span>
            </li>
            <li className="flex h-[31px] items-center gap-[8px] pl-4">
              <svg viewBox="0 0 20 17" className="h-[17px] w-5" fill="none" aria-hidden="true">
                <path d="M0 0h20v5H0z" fill="#5f9fcd" />
                <path d="M1 1h18v15H1zM1 5h18M1 9h18M1 12.500h18M5.500 5v11M10 5v11M14.500 5v11" stroke="#777" strokeWidth="1.200" />
              </svg>
              PROVCenso2010_SpatialJoin17b_stat
            </li>
          </ul>
        </div>
        <div className="flex pt-1 pb-[2px]"><ScrollBar /></div>
      </div>
    </aside>
  );
}

function MapView() {
  return (
    <main className="flex min-w-0 flex-1 flex-col">
      <div className="flex items-center justify-between pr-[6px]">
        <div className="flex h-[25px] items-center gap-[6px] bg-[#cbcbcb] px-[7px] text-[#777]">
          <svg viewBox="0 0 20 20" className="size-5" aria-hidden="true">
            <path d="M1 1h18v18H1z" fill="#e8f4fa" stroke="#6d7a78" strokeWidth="1.600" />
            <path d="M2 2h10l-2 5-3 3 1 3-2 5H2zM9 14l4-5 5-5v3l-5 6-2 5z" fill="#96bf92" />
          </svg>
          <span>Nuevos_casos</span>
          <button type="button" aria-label="Cerrar vista" className="flex"><Cross /></button>
        </div>
        <button type="button" aria-label="Lista de vistas" className="text-[#777]"><Caret className="w-[10px]" /></button>
      </div>
      <div className="flex flex-1 flex-col border-x border-t-[3px] border-b-2 border-x-[#dcdcdc] border-t-[#cbcbcb] border-b-[#e2e2e2] bg-[#f8f9f9]">
        <div className="relative flex flex-1 justify-center">
          <MapDrawing />
          <div className="absolute top-[32px] right-[53px] left-[41px]">
            <input
              type="range"
              aria-label="Tiempo"
              defaultValue={0}
              className="block h-[37px] w-full appearance-none bg-transparent [&::-webkit-slider-runnable-track]:h-[13px] [&::-webkit-slider-runnable-track]:rounded-[3px] [&::-webkit-slider-runnable-track]:border [&::-webkit-slider-runnable-track]:border-[#838989] [&::-webkit-slider-thumb]:-mt-[13px] [&::-webkit-slider-thumb]:h-[37px] [&::-webkit-slider-thumb]:w-5 [&::-webkit-slider-thumb]:appearance-none [&::-webkit-slider-thumb]:bg-[linear-gradient(to_right,#a8cbe2_8%,#c4dded_8%,#c4dded_46%,#a8cbe2_46%,#a8cbe2_54%,#c9e0ef_54%,#c9e0ef_92%,#a8cbe2_92%)] [&::-webkit-slider-thumb]:[clip-path:polygon(50%_0,100%_22%,100%_78%,50%_100%,0_78%,0_22%)]"
            />
          </div>
          <span className="absolute top-[67px] left-[16px] leading-5 text-[#555]">30/03/2020 0:00:00</span>
        </div>
        <div className="flex h-8 items-center bg-[#fafbfb] pr-[7px] pl-[5px] text-[#555]">
          <div className="flex flex-1 items-center">
            <Select label="Escala" value="1:2 897 520" className="w-[128px]" />
            <span className="mr-[5px] ml-[6px] h-[18px] w-px bg-[#b5b5b5]" />
            <button type="button" aria-label="Cuadrícula nueva" className="mx-1"><GridPlus className="size-5" /></button>
            <button type="button" aria-label="Restricciones" className="mx-1">
              <svg viewBox="0 0 21 19" className="h-[19px] w-[21px]" fill="none" aria-hidden="true">
                <path d="M4 16 10 5l4 5 5 6z" fill="#cfe4f3" />
                <path d="M3 17h17" stroke="#8ab9db" strokeWidth="1.500" />
                <path d="M1 2h5v3H1zM15 11h5v3h-5z" stroke="#666" strokeWidth="1.500" />
                <path d="M3 14 12 4" stroke="#6aa5cf" strokeWidth="2" strokeDasharray="2 1.500" />
                <path d="M14 3h6M17 0v6" stroke="#777" strokeWidth="1.500" />
                <path d="M1 15h3.500v3.500H1z" fill="#5f9c5a" />
              </svg>
            </button>
            <button type="button" aria-label="Cuadrícula" className="mx-1">
              <svg viewBox="0 0 18 18" className="size-[18px]" fill="none" stroke="#999" aria-hidden="true">
                <path d="M.5.5h17v17H.5zM4.500 0v18M8.500 0v18M13.500 0v18M0 4.500h18M0 8.500h18M0 13.500h18" strokeWidth="1.200" />
              </svg>
            </button>
            <span className="mx-2 h-[18px] w-px bg-[#b5b5b5]" />
          </div>
          <output className="mr-[190px]">71.1295583°W 19.3543440°N</output>
          <span className="h-[18px] w-px bg-[#c5c5c5]" />
          <span className="flex items-center gap-[6px] px-[6px] text-[#9a9a9a]">
            <svg viewBox="0 0 21 20" className="h-5 w-[21px]" fill="none" aria-hidden="true">
              <path d="M9 1h11v12h-7M12 1l3 5 5-1M15 6v7" stroke="#bbb" strokeWidth="1.500" />
              <circle cx="7" cy="10.500" r="5" fill="#eef6fb" stroke="#a9cfe8" strokeWidth="2" />
              <path d="M4.500 10.500h5M7 8v5" stroke="#9aa" />
              <path d="M11 14.500 15 19" stroke="#dcb999" strokeWidth="2.500" />
            </svg>
            Entidades seleccionadas: 0
          </span>
          <span className="h-[18px] w-px bg-[#b5b5b5]" />
          <button type="button" aria-label="Pausar dibujo" className="mx-[9px]">
            <svg viewBox="0 0 18 17" className="h-[17px] w-[18px]" fill="#6d6d6d" aria-hidden="true"><path d="M0 0h7v17H0zM11 0h7v17h-7z" /></svg>
          </button>
          <span className="h-[18px] w-px bg-[#b5b5b5]" />
          <button type="button" aria-label="Actualizar" className="ml-[7px]">
            <svg viewBox="0 0 21 20" className="h-5 w-[21px]" fill="none" stroke="#64a7db" strokeWidth="3.200" aria-hidden="true">
              <path d="M2 7C5 1 12 0 17 5M19 13c-3 6-10 7-15 2" />
              <path d="M21 0v8h-8zM0 20v-8h8z" fill="#64a7db" stroke="none" />
            </svg>
          </button>
        </div>
      </div>
    </main>
  );
}

const presets: { name: string; icon: ReactNode }[] = [
  { name: "Twitter", icon: <Twitter /> },
  { name: "Instagram", icon: <Instagram /> },
  { name: "HD720", icon: <Monitor text="720" size={17} /> },
  { name: "HD1080", icon: <Monitor text="1080" size={15} /> },
  { name: "GIF", icon: <Gif /> },
];

function Expander({ children }: { children: ReactNode }) {
  return (
    <button type="button" className="mb-3 flex h-[25px] w-full items-center bg-[#ebebeb] pl-[6px] text-left font-semibold whitespace-nowrap text-[#444]">
      <svg viewBox="0 0 8 11" className="mr-2 h-[11px] w-2 shrink-0" fill="none" stroke="#666" strokeWidth="2.500" aria-hidden="true"><path d="M1 1l5 4.500L1 10" /></svg>
      {children}
    </button>
  );
}

function Export() {
  return (
    <aside className="flex w-[437px] shrink-0 flex-col text-[#555]">
      <div className="flex flex-1 flex-col border-b border-l border-[#d0d0d0] bg-[#f8f9f9]">
        <PaneHeader title="Exportar película" blue />
        <div className="flex min-h-0 flex-1">
          <div className="flex min-w-0 flex-1 flex-col overflow-hidden">
            <div className="h-[226px] w-[422px] shrink-0 overflow-hidden border-r-2 border-b-2 border-[#cdcdcd] bg-white">
              <div className="-mt-[6px] grid w-[339px] grid-cols-3 text-center">
                <button type="button" className="h-6 leading-[18px]">Borrador</button>
                <button type="button" className="h-6 bg-[#ededed] leading-[18px]">YouTube</button>
                <button type="button" className="h-6 leading-[18px]">Vimeo</button>
                {presets.map((p) => (
                  <button key={p.name} type="button" className="flex h-[99px] flex-col items-center pt-2">
                    <span className="flex h-[62px] items-center">{p.icon}</span>
                    <span className="mt-[5px] leading-6">{p.name}</span>
                  </button>
                ))}
              </div>
            </div>
            <div className="mt-1 w-[422px] border-t border-[#b5b5b5]" />
            <div className="pr-3 pl-[11px] pt-[11px]">
              <div className="flex items-center gap-[5px] whitespace-nowrap">
                <Check id="scale" checked />
                <label htmlFor="scale">Escala automáticamente el tamaño de superposición a</label>
              </div>
              <label htmlFor="file" className="mt-[6px] block leading-6">Nombre del archivo</label>
              <div className="flex items-center gap-[6px]">
                <input id="file" defaultValue="C:\Users\maria\Desktop\Nuevos_casos_diario.mp4" className="h-[29px] w-[369px] border-2 border-[#b8b8b8] bg-white px-[3px]" />
                <button type="button" aria-label="Examinar">
                  <svg viewBox="0 0 22 20" className="h-5 w-[22px]" aria-hidden="true">
                    <path d="M1 18V6h6l2 2h9v3" fill="#f0dd8c" stroke="#8f7a32" />
                    <path d="M1 19 5 11h16l-3 8z" fill="#dcc055" stroke="#8f7a32" />
                    <path d="M11 5c1-2 3-3 5-3" fill="none" stroke="#3c6fa0" strokeWidth="1.800" />
                    <path d="M15 0l5 2.500-4 3.500z" fill="#3c6fa0" />
                  </svg>
                </button>
              </div>
            </div>
            <div className="mt-[14px] w-[422px]">
              <Expander>Configuración de importar archivo</Expander>
              <Expander>Configuración avanzada de exportación de películas</Expander>
            </div>
            <div className="mt-[2px] flex w-[422px] justify-end pr-[6px]">
              <button type="button" disabled className="h-[29px] w-[149px] border-x border-t border-[#b5b5b5] text-[#c4c4c4]">Guardar preajuste</button>
            </div>
          </div>
          <div className="flex pt-[3px] pr-[1px]"><ScrollBar blue /></div>
        </div>
        <div className="mt-[18px] mb-1 flex h-[31px] items-center">
          <div className="flex h-full flex-1 flex-col justify-end">
            <div className="flex justify-between pr-2 leading-6">
              <label htmlFor="frames">2367 / 5461</label>
              <span>(00:10:54)</span>
            </div>
            <progress
              id="frames"
              max={5461}
              value={2367}
              className="h-[5px] w-[333px] appearance-none [&::-webkit-progress-bar]:bg-transparent [&::-webkit-progress-value]:bg-[#2b74bc]"
            />
          </div>
          <button type="button" className="mr-[5px] h-[31px] w-[91px] border-2 border-[#666] bg-white">Detener</button>
        </div>
      </div>
      <nav className="flex h-[26px] justify-between pr-2 pl-[7px]">
        <button type="button">Catálogo</button>
        <button type="button">Propiedad...</button>
        <button type="button" className="-mt-px border-x border-b border-[#d0d0d0] bg-[#f8f9f9] pr-3 pl-[7px] text-[#2b78cb]">Exportar...</button>
        <button type="button">Elemento</button>
        <button type="button">Simbolo...</button>
      </nav>
    </aside>
  );
}

/* ---------- page ---------- */

const handle = "absolute border border-[#999] bg-white shadow-sm";

export default function App() {
  return (
    <div className="relative flex min-h-screen flex-col overflow-hidden bg-white pt-1 font-['Open_Sans',sans-serif] text-[15px] leading-5">
      <div className="ml-[5px] flex flex-1 flex-col border-t-2 border-l-2 border-[#929292] bg-[#f1f1f1]">
        <Header />
        <Ribbon />
        <div className="flex flex-1 gap-2 pt-2 pb-2 pl-[3px]">
          <Contents />
          <MapView />
          <Export />
        </div>
        <div className="ml-[3px] h-[5px] bg-[#cbcbcb]" />
        <div className="ml-[3px] h-[3px] bg-white" />
      </div>

      <svg className="pointer-events-none absolute top-0 left-0 h-[240px] w-[1964px]" viewBox="0 0 1964 240" fill="none" stroke="#ec3223" strokeWidth="2.600" aria-hidden="true">
        <ellipse cx="144" cy="145" rx="137" ry="87" />
        <ellipse cx="533" cy="147" rx="160" ry="58" />
        <ellipse cx="1298" cy="146" rx="124" ry="71" />
      </svg>
      <div className={`${handle} -top-1 -left-1 h-[15px] w-4`} />
      <div className={`${handle} -top-1 left-1/2 h-[15px] w-4`} />
      <div className={`${handle} top-[528px] -left-[3px] size-4`} />
      <div className={`${handle} top-[528px] -right-[14px] size-4`} />
    </div>
  );
}
